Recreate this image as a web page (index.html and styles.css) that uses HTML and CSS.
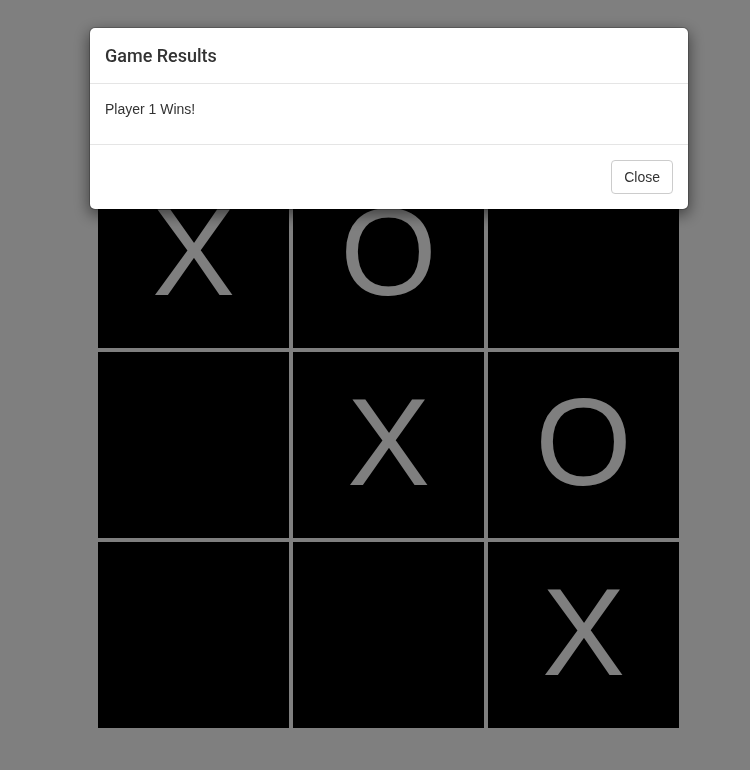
FILE: index.html
```html
<!DOCTYPE html>
<html>
<head>
<meta charset="utf-8">
<title>Tic Tac Toe</title>
<link rel="stylesheet" href="styles.css">
</head>
<body>
<main class="page">
  <div class="board">
    <div class="cell"><span class="mark">X</span></div>
    <div class="cell"><span class="mark">O</span></div>
    <div class="cell"></div>
    <div class="cell"></div>
    <div class="cell"><span class="mark">X</span></div>
    <div class="cell"><span class="mark">O</span></div>
    <div class="cell"></div>
    <div class="cell"></div>
    <div class="cell"><span class="mark">X</span></div>
  </div>
</main>
<div class="backdrop"></div>
<div class="modal">
  <div class="modal-content">
    <div class="modal-header">
      <h4 class="modal-title">Game Results</h4>
    </div>
    <div class="modal-body">
      <p class="result">Player 1 Wins!</p>
    </div>
    <div class="modal-footer">
      <button class="btn" type="button">Close</button>
    </div>
  </div>
</div>
</body>
</html>
```

FILE: styles.css
```css
html, body {
  margin: 0;
  padding: 0;
  background: #ffffff;
  font-family: "Liberation Sans", Arial, Helvetica, sans-serif;
  font-size: 14px;
  line-height: 1.42857;
  color: #333333;
}

.page {
  padding: 162px 0 0 98px;
}

.board {
  display: grid;
  grid-template-columns: repeat(3, 191px);
  grid-template-rows: repeat(3, 186px);
  gap: 4px;
  width: 581px;
}

.cell {
  background: #000000;
  color: #ffffff;
  text-align: center;
  font-size: 124px;
  line-height: 180px;
  overflow: hidden;
}

.mark {
  display: inline-block;
}

.backdrop {
  position: fixed;
  inset: 0;
  background: rgba(0, 0, 0, 0.5);
}

.modal {
  position: fixed;
  top: 27px;
  left: 89px;
  width: 600px;
}

.modal-content {
  background: #ffffff;
  border: 1px solid rgba(0, 0, 0, 0.2);
  border-radius: 6px;
  box-shadow: 0 5px 15px rgba(0, 0, 0, 0.5);
  background-clip: padding-box;
}

.modal-header {
  padding: 15px;
  border-bottom: 1px solid #e5e5e5;
}

.modal-title {
  margin: 0;
  font-family: Roboto, "Liberation Sans", Arial, sans-serif;
  font-size: 18px;
  font-weight: 500;
  line-height: 25px;
  color: #333333;
}

.modal-body {
  padding: 16px 15px 14px;
}

.result {
  margin: 0 0 10px;
}

.modal-footer {
  padding: 15px;
  border-top: 1px solid #e5e5e5;
  display: flex;
  justify-content: flex-end;
}

.btn {
  font-family: "Liberation Sans", Arial, sans-serif;
  font-size: 14px;
  line-height: 20px;
  padding: 6px 12px;
  color: #333333;
  background: #ffffff;
  border: 1px solid #cccccc;
  border-radius: 4px;
}
```
